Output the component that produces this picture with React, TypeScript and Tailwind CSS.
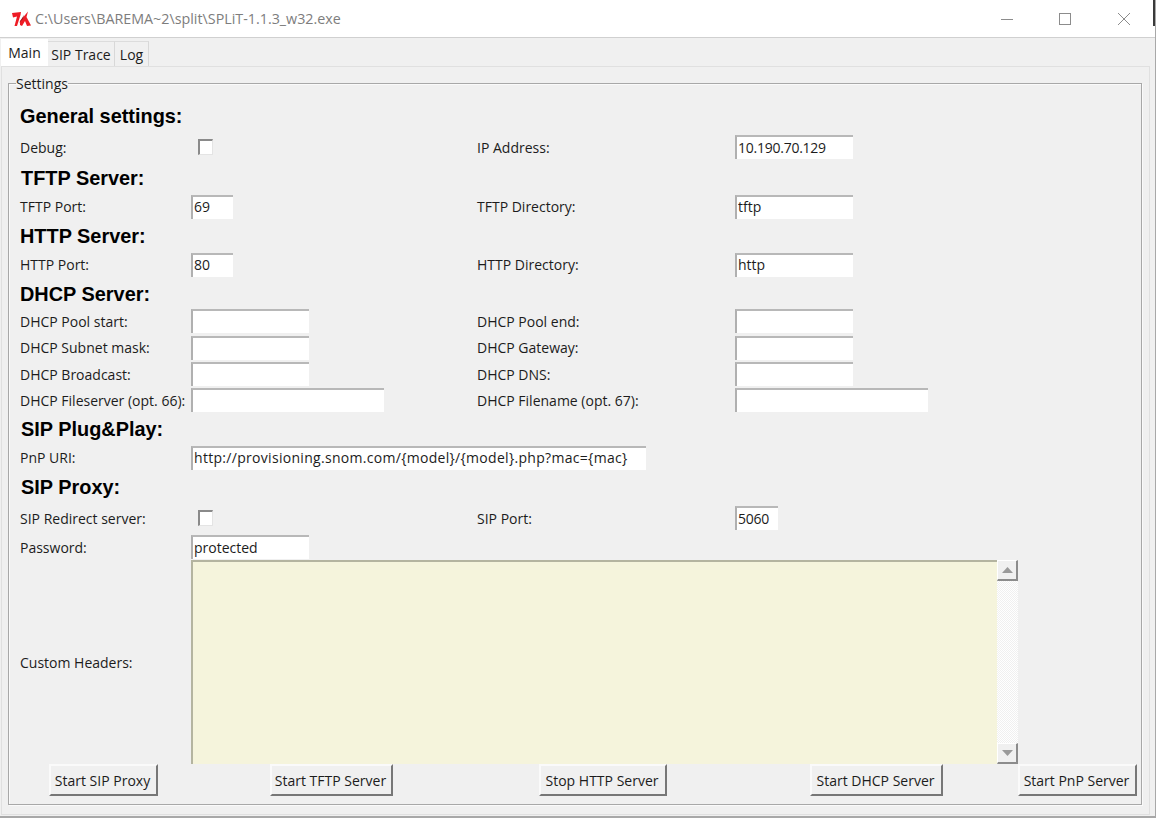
const ui = "font-['Open_Sans',sans-serif] text-[14px] text-[#1c1c1c]";

function Heading({ children, h, ml = "", pt = "pt-[3px]" }: { children: string; h: string; ml?: string; pt?: string }) {
  return (
    <div className={`${h} ${ml} ${pt} flex items-center font-['Liberation_Sans',sans-serif] text-[19.9px] font-bold text-black`}>
      {children}
    </div>
  );
}

function Field({ value = "", w, track = "" }: { value?: string; w: string; track?: string }) {
  return (
    <input
      readOnly
      value={value}
      className={`${w} ${track} h-6 border-t-2 border-l-2 border-t-[#b8b8b8] border-l-[#b0b0b0] bg-white pb-[2px] pl-[1px] ${ui} outline-none`}
    />
  );
}

function Check() {
  return (
    <div className="ml-[7px] h-[16px] w-[15px] border-t-2 border-l-2 border-t-[#8a8a8a] border-l-[#8a8a8a] border-r border-b border-r-[#e4e4e4] border-b-[#e4e4e4] bg-white" />
  );
}

function Row({ h, children }: { h: string; children: React.ReactNode }) {
  return <div className={`${h} grid grid-cols-[171px_286px_258px_1fr] items-center ${ui}`}>{children}</div>;
}

function StartButton({ label, w, ml }: { label: string; w: string; ml: string }) {
  return (
    <button className={`${w} ${ml} h-[32px] shrink-0 border-t-2 border-l-2 border-r-2 border-b-2 border-t-[#fafafa] border-l-[#fafafa] border-r-[#777777] border-b-[#777777] bg-[#f0f0f0] pr-[2px] ${ui}`}>
      {label}
    </button>
  );
}

function ScrollArrow({ up }: { up?: boolean }) {
  return (
    <div className="flex h-[21px] w-[21px] items-center justify-center border-t border-l border-r-2 border-b-2 border-t-white border-l-white border-r-[#8c8c8c] border-b-[#8c8c8c] bg-[#f0f0f0]">
      <svg width="11" height="6" viewBox="0 0 11 6">
        <path d={up ? "M5.5 0 L11 6 L0 6 Z" : "M0 0 L11 0 L5.5 6 Z"} fill="#9a9a9a" />
      </svg>
    </div>
  );
}

export default function App() {
  return (
    <div className="relative flex h-[818px] w-[1156px] flex-col overflow-hidden border-r border-b-2 border-r-[#a8a8a8] border-b-[#a8a8a8] bg-[#f0f0f0]">
      {/* dark sliver of the window behind */}
      <div className="absolute top-0 right-0 h-[26px] w-[2px] bg-[#3a3a3a]" />

      {/* title bar */}
      <div className="flex h-[38px] shrink-0 items-center border-b border-b-[#d0d0d0] bg-white">
        <svg className="ml-[12px]" width="19" height="16" viewBox="0 0 19 16">
          <path d="M0 2 L9 1 L8.5 4 L5 15 L2.5 15 L5 5.5 L1 6.5 Z" fill="#ee1c25" />
          <path d="M8 10 L16 0.5 L14.5 6 L19 14.5 L15 15 L13 10 L10 15 L8 14 Z" fill="#ee1c25" />
          <path d="M7 12 L12 4 L11 8 Z" fill="#9a1a20" />
        </svg>
        <span className="ml-[4px] font-['Open_Sans',sans-serif] text-[14.3px] text-[#7d7d7d]">
          C:\Users\BAREMA~2\split\SPLiT-1.1.3_w32.exe
        </span>
        <div className="ml-auto flex items-center gap-[46px] pr-[25px] text-[#8c8c8c]">
          <svg width="12" height="12" viewBox="0 0 12 12"><path d="M0 6.5 H12" stroke="currentColor" /></svg>
          <svg className="mr-[1px]" width="12" height="12" viewBox="0 0 12 12"><rect x="0.5" y="0.5" width="11" height="11" fill="none" stroke="currentColor" /></svg>
          <svg width="12" height="12" viewBox="0 0 12 12"><path d="M0 0 L12 12 M12 0 L0 12" stroke="currentColor" /></svg>
        </div>
      </div>

      {/* tabs */}
      <div className={`flex h-[28px] shrink-0 items-end pl-[1px] ${ui}`}>
        <div className="flex h-[27px] w-[47px] items-center justify-center bg-white">Main</div>
        <div className="flex h-[25px] w-[67px] items-center justify-center border-t border-r border-t-[#dcdcdc] border-r-[#d8d8d8]">SIP Trace</div>
        <div className="flex h-[25px] w-[34px] items-center justify-center border-t border-r border-t-[#dcdcdc] border-r-[#d8d8d8]">Log</div>
      </div>

      {/* notebook pane */}
      <div className="mb-[1px] mr-[5px] ml-[1px] flex min-h-0 flex-1 flex-col border border-[#e0e0e0] pt-[8px] pr-[7px] pb-[9px] pl-[6px]">
        <fieldset className="flex min-h-0 flex-1 flex-col border border-[#a8a8a8] pl-[11px] shadow-[inset_1px_1px_0_#fafafa,1px_1px_0_#fafafa]">
          <legend className={`-ml-[4px] h-[16px] leading-[18px] ${ui}`}>Settings</legend>

          <div className="flex flex-col pt-[8px]">
            <Heading h="h-[33px]">General settings:</Heading>
            <Row h="h-[30px]">
              <span>Debug:</span>
              <Check />
              <span>IP Address:</span>
              <Field w="w-[118px]" track="tracking-[-0.25px]" value="10.190.70.129" />
            </Row>
            <Heading h="h-[30px]" ml="ml-[1px]">TFTP Server:</Heading>
            <Row h="h-[29px]">
              <span>TFTP Port:</span>
              <Field w="w-[42px]" value="69" />
              <span>TFTP Directory:</span>
              <Field w="w-[118px]" value="tftp" />
            </Row>
            <Heading h="h-[29px]">HTTP Server:</Heading>
            <Row h="h-[29px]">
              <span>HTTP Port:</span>
              <Field w="w-[42px]" value="80" />
              <span>HTTP Directory:</span>
              <Field w="w-[118px]" value="http" />
            </Row>
            <Heading h="h-[29px]">DHCP Server:</Heading>
            <Row h="h-[26px]">
              <span>DHCP Pool start:</span>
              <Field w="w-[118px]" />
              <span>DHCP Pool end:</span>
              <Field w="w-[118px]" />
            </Row>
            <Row h="h-[27px]">
              <span>DHCP Subnet mask:</span>
              <Field w="w-[118px]" />
              <span>DHCP Gateway:</span>
              <Field w="w-[118px]" />
            </Row>
            <Row h="h-[26px]">
              <span>DHCP Broadcast:</span>
              <Field w="w-[118px]" />
              <span>DHCP DNS:</span>
              <Field w="w-[118px]" />
            </Row>
            <Row h="h-[26px]">
              <span>DHCP Fileserver (opt. 66):</span>
              <Field w="w-[193px]" />
              <span>DHCP Filename (opt. 67):</span>
              <Field w="w-[193px]" />
            </Row>
            <Heading h="h-[30px]" ml="ml-[1px]">SIP Plug&amp;Play:</Heading>
            <Row h="h-[29px]">
              <span>PnP URI:</span>
              <div className="col-span-3">
                <Field w="w-[455px]" track="tracking-[0.3px]" value="http://provisioning.snom.com/{model}/{model}.php?mac={mac}" />
              </div>
            </Row>
            <Heading h="h-[30px]" ml="ml-[1px]" pt="pt-[2px]">SIP Proxy:</Heading>
            <Row h="h-[32px]">
              <span>SIP Redirect server:</span>
              <Check />
              <span>SIP Port:</span>
              <Field w="w-[43px]" track="tracking-[-0.25px]" value="5060" />
            </Row>
            <Row h="h-[26px]">
              <span>Password:</span>
              <div className="col-span-3">
                <Field w="w-[118px]" value="protected" />
              </div>
            </Row>
            <div className={`flex h-[204px] items-center ${ui}`}>
              <span className="w-[171px] shrink-0">Custom Headers:</span>
              <div className="h-full w-[806px] border-t-2 border-l-2 border-t-[#b4b4a0] border-l-[#b4b4a0] bg-[#f5f4dc]" />
              <div className="flex h-full w-[21px] flex-col justify-between bg-[repeating-conic-gradient(#f0f0f0_0%_25%,#ffffff_0%_50%)] bg-[length:2px_2px]">
                <ScrollArrow up />
                <ScrollArrow />
              </div>
            </div>
          </div>

          <div className="flex">
            <StartButton label="Start SIP Proxy" w="w-[109px]" ml="ml-[29px]" />
            <StartButton label="Start TFTP Server" w="w-[123px]" ml="ml-[112px]" />
            <StartButton label="Stop HTTP Server" w="w-[128px]" ml="ml-[146px]" />
            <StartButton label="Start DHCP Server" w="w-[133px]" ml="ml-[143px]" />
            <StartButton label="Start PnP Server" w="w-[119px]" ml="ml-[75px]" />
          </div>
        </fieldset>
      </div>
    </div>
  );
}
